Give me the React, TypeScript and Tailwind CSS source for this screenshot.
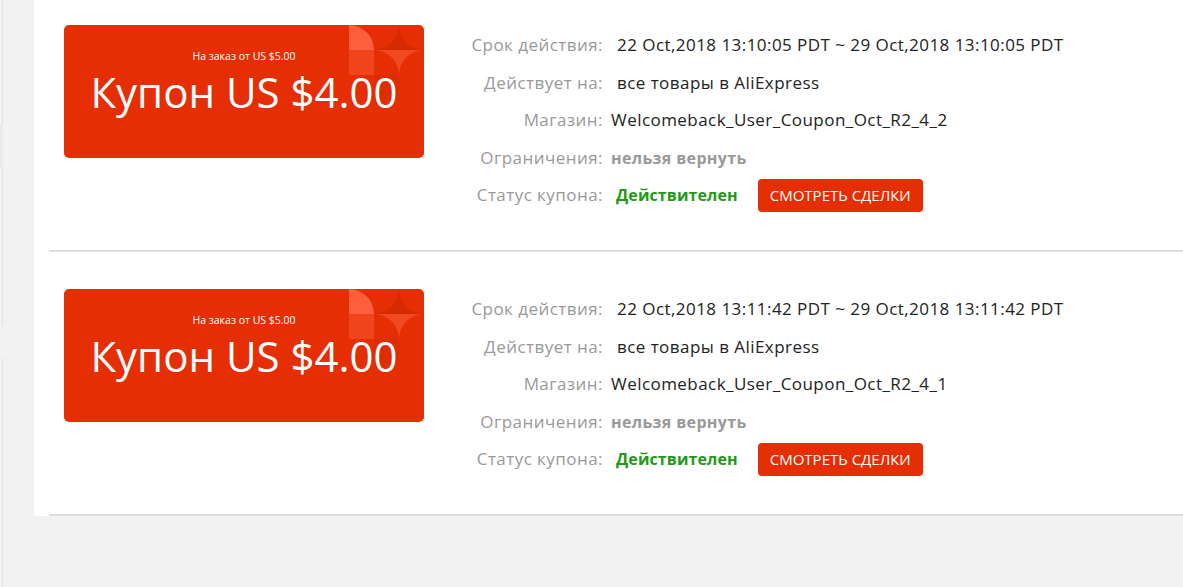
import * as React from "react"

const COUPONS = [
  {
    period: "22 Oct,2018 13:10:05 PDT ~ 29 Oct,2018 13:10:05 PDT",
    store: "Welcomeback_User_Coupon_Oct_R2_4_2",
  },
  {
    period: "22 Oct,2018 13:11:42 PDT ~ 29 Oct,2018 13:11:42 PDT",
    store: "Welcomeback_User_Coupon_Oct_R2_4_1",
  },
]

function CornerPattern() {
  return (
    <svg width="75" height="75" viewBox="0 0 75 75" className="absolute right-0 top-0">
      {/* quarter circle */}
      <path d="M0 25 L0 0 A25 25 0 0 1 25 25 Z" fill="#ff5e3f" />
      <rect x="0" y="25" width="25" height="25" fill="#f0441d" />
      {/* sparkle: top half darker, bottom half lighter */}
      <path d="M25 25 A25 25 0 0 0 50 0 A25 25 0 0 0 75 25 Z" fill="#d52a02" />
      <path d="M25 25 A25 25 0 0 1 50 50 A25 25 0 0 1 75 25 Z" fill="#f14a22" />
      <rect x="25" y="50" width="25" height="25" fill="#d92c04" opacity="0.6" />
    </svg>
  )
}

function Row({ label, children }: { label: string; children: React.ReactNode }) {
  return (
    <div className="flex items-center h-[37.6px]">
      <div className="w-[143px] shrink-0 text-right text-[#999999]">{label}</div>
      <div className="pl-[8px] flex items-center">{children}</div>
    </div>
  )
}

function CouponCard({ period, store, first }: { period: string; store: string; first: boolean }) {
  return (
    <div
      className={
        first
          ? "ml-[15px] border-b-2 border-[#dedede] pt-[25px] pb-[36px] flex"
          : "ml-[15px] border-b-2 border-[#dedede] pt-[37px] pb-[36px] flex"
      }
    >
      <div className="ml-[15px] relative w-[360px] h-[133px] shrink-0 rounded-[5px] bg-[#e52e04] overflow-hidden flex flex-col items-center text-white">
        <CornerPattern />
        <div className="relative mt-[23px] text-[10.5px] leading-[16px]">На заказ от US $5.00</div>
        <div className="relative mt-[3px] text-[42px] leading-[50px]">Купон US $4.00</div>
      </div>
      <div className="ml-[36px] mt-[1px] text-[17px] tracking-[0.45px] text-[#222222]">
        <Row label="Срок действия:">
          <span className="pl-[6px]">{period}</span>
        </Row>
        <Row label="Действует на:">
          <span className="pl-[6px]">все товары в AliExpress</span>
        </Row>
        <Row label="Магазин:">{store}</Row>
        <Row label="Ограничения:">
          <span className="text-[16px] tracking-[0.35px] font-bold text-[#999999]">нельзя вернуть</span>
        </Row>
        <Row label="Статус купона:">
          <span className="pl-[5px] text-[16px] tracking-[0.1px] font-bold text-[#1f9a16]">Действителен</span>
          <button className="ml-[20px] h-[33px] w-[165px] rounded-[4px] bg-[#e52e04] text-[15px] tracking-normal text-white">
            СМОТРЕТЬ СДЕЛКИ
          </button>
        </Row>
      </div>
    </div>
  )
}

export default function App() {
  return (
    <div className="w-[1183px] h-[587px] bg-[#f2f2f2] flex overflow-hidden" style={{ fontFamily: "'Open Sans', sans-serif" }}>
      {/* left edge */}
      <div className="w-[34px] shrink-0 flex flex-col">
        <div className="h-[124px] w-[3px] border-r border-[#e2e2e2]" />
        <div className="h-[44px] w-[3px] bg-[#ebebeb]" />
        <div className="h-[158px] w-[3px] border-r border-[#e2e2e2]" />
        <div className="h-[32px] w-[3px]" />
        <div className="flex-1 w-[3px] border-r border-[#e2e2e2]" />
      </div>
      <div className="flex-1 self-start bg-white">
        {COUPONS.map((c, i) => (
          <CouponCard key={c.store} period={c.period} store={c.store} first={i === 0} />
        ))}
      </div>
    </div>
  )
}
